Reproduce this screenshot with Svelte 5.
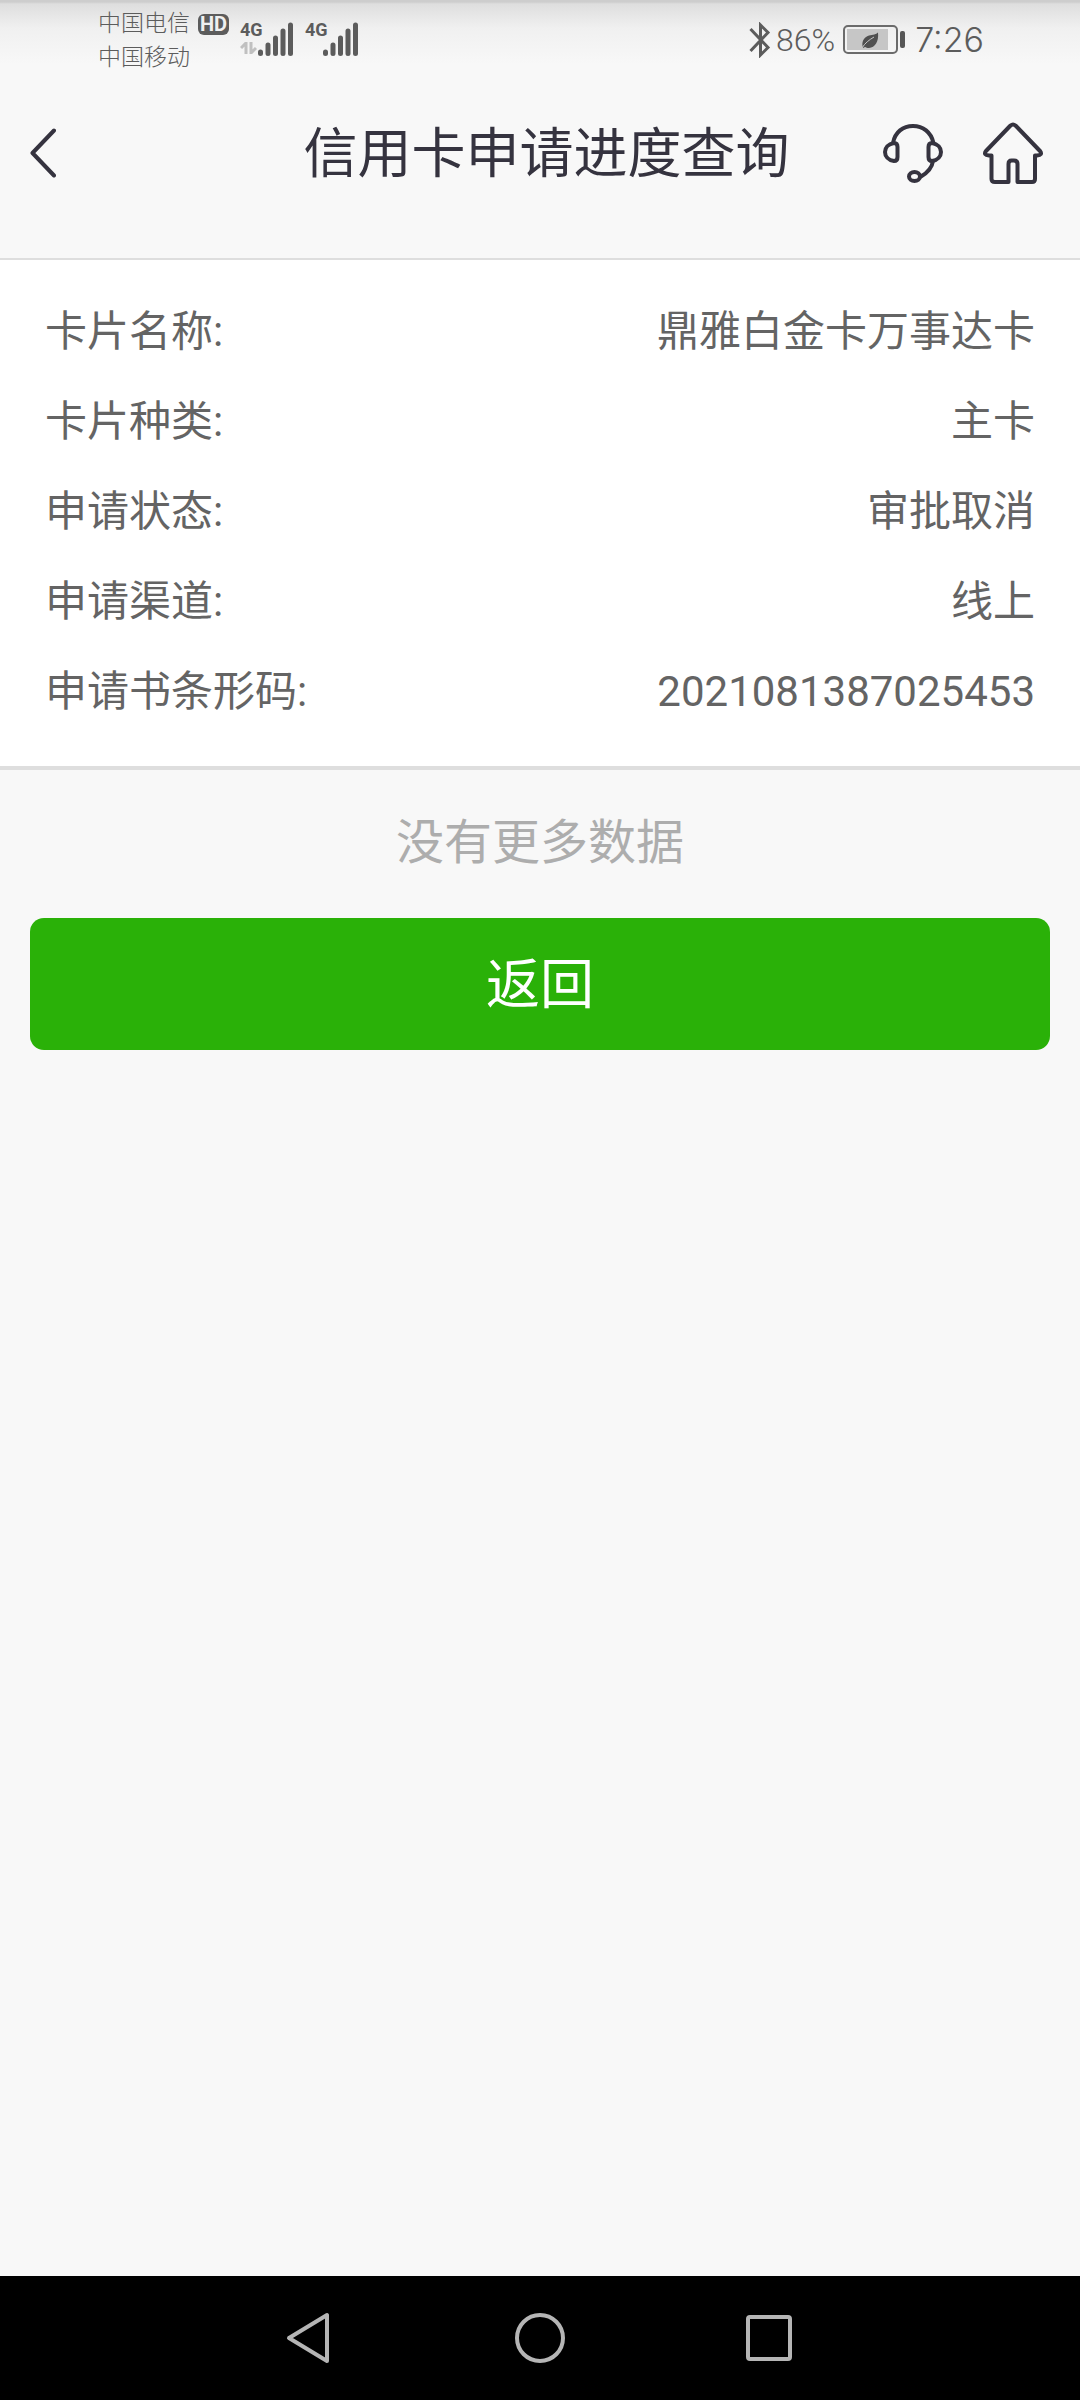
<script lang="ts">
  const details = [
    { label: '卡片名称:', value: '鼎雅白金卡万事达卡' },
    { label: '卡片种类:', value: '主卡' },
    { label: '申请状态:', value: '审批取消' },
    { label: '申请渠道:', value: '线上' },
    { label: '申请书条形码:', value: '2021081387025453' },
  ];
</script>

{#snippet signal(data: boolean)}
  <div class="signal">
    <div class="network">
      <span>4G</span>
      {#if data}
        <svg width="17" height="12" viewBox="0 0 17 12" aria-hidden="true">
          <path d="M6 12V1L1 6M11 0v11l5-5" />
        </svg>
      {/if}
    </div>
    <svg class="bars" width="35" height="34" viewBox="0 0 35 34" aria-hidden="true">
      <path d="M2.5 30v1.5M10 23v8.5M17.5 16v15.5M25 9v22.5M32.5 3v28.5" />
    </svg>
  </div>
{/snippet}

<div class="screen">
  <div class="status-bar">
    <div class="status-left">
      <div class="carriers">
        <div class="carrier">中国电信 <span class="hd">HD</span></div>
        <div class="carrier">中国移动</div>
      </div>
      {@render signal(true)}
      {@render signal(false)}
    </div>
    <div class="status-right">
      <svg class="bluetooth" width="22" height="36" viewBox="0 0 22 36" aria-label="蓝牙">
        <path d="M1.500 7 19 25.500 11.500 33V3L19 10.500 1.500 29" />
      </svg>
      <span class="percent">86%</span>
      <svg class="battery" width="62" height="30" viewBox="0 0 62 30" aria-hidden="true">
        <rect x="1" y="1" width="53" height="27" rx="4" fill="none" stroke="#6b6b6b" stroke-width="2" />
        <rect x="4" y="4" width="41" height="21" fill="#c6c6c6" />
        <rect x="57" y="6" width="5" height="17" rx="2" fill="#565656" />
        <path
          d="M20 23c-2-6 1-11 6-12.500 4-1 7-1 9-3 1 9-3 15-9 15.500-2 0-3-.5-4-1z"
          fill="#505050"
        />
        <path d="M19 23c3-5 7-8 12-11" fill="none" stroke="#c6c6c6" />
      </svg>
      <span class="time">7:26</span>
    </div>
  </div>

  <header>
    <button class="icon back" aria-label="后退">
      <svg width="26" height="50" viewBox="0 0 26 50">
        <path d="M24 2.500 2.500 25 24 47.500" />
      </svg>
    </button>
    <h1>信用卡申请进度查询</h1>
    <div class="actions">
      <button class="icon" aria-label="客服">
        <svg width="60" height="62" viewBox="0 0 60 62">
          <path d="M10 21C12 10 20 4 30 4s18 6 20.500 17" />
          <path d="M11 21Q14.500 21 14.500 25V35Q14.500 39 11 39C5 38 2 34 2 30S5 22 11 21z" />
          <path d="M49 21Q45.500 21 45.500 25V35Q45.500 39 49 39C55 38 58 34 58 30S55 22 49 21z" />
          <path d="M50 39c-1 7-6 12-12 15.500" />
          <ellipse cx="31.500" cy="54.500" rx="5.500" ry="4.500" />
        </svg>
      </button>
      <button class="icon" aria-label="首页">
        <svg width="60" height="62" viewBox="0 0 60 62">
          <path
            d="M27.500 3.500Q30 1.500 32.500 3.500L57 29Q60 33 54 33.500H52V57Q52 60 49 60H34.500V42Q34.500 38.500 31 38.500H28.500Q25.500 38.500 25.500 42V60H12Q8.500 60 8.500 57V33.500H6Q0 33 3 29Z"
          />
        </svg>
      </button>
    </div>
  </header>

  <main>
    <dl class="details">
      {#each details as item}
        <div class="row">
          <dt>{item.label}</dt>
          <dd>{item.value}</dd>
        </div>
      {/each}
    </dl>
    <p class="empty">没有更多数据</p>
    <button class="submit">返回</button>
  </main>

  <nav>
    <button class="icon" aria-label="系统返回">
      <svg width="50" height="54" viewBox="0 0 50 54">
        <path d="M42 4v46L4 27z" />
      </svg>
    </button>
    <button class="icon" aria-label="主屏幕">
      <svg width="50" height="54" viewBox="0 0 50 54">
        <circle cx="25" cy="27" r="23" />
      </svg>
    </button>
    <button class="icon" aria-label="最近任务">
      <svg width="50" height="54" viewBox="0 0 50 54">
        <rect x="3" y="6" width="42" height="42" rx="2" />
      </svg>
    </button>
  </nav>
</div>

<style>
  :global(body) {
    margin: 0;
    background: #f8f8f8;
  }

  .screen {
    display: flex;
    flex-direction: column;
    min-height: 100vh;
    background: #f8f8f8;
    color: #646464;
    font-family: Roboto, 'Noto Sans CJK SC', sans-serif;
  }

  button {
    font: inherit;
    cursor: pointer;
  }

  .icon {
    display: flex;
    padding: 0;
    border: 0;
    background: none;
  }

  .icon path,
  .icon ellipse,
  .icon circle,
  .icon rect {
    fill: none;
    stroke: #35333f;
    stroke-width: 4;
    stroke-linecap: round;
    stroke-linejoin: round;
  }

  /* status bar */
  .status-bar {
    display: flex;
    justify-content: space-between;
    height: 80px;
    padding: 0 96px 0 98px;
    background: linear-gradient(#cdcdcd 0, #cdcdcd 2px, #dedede 4px, #f0f0f0 28px, #f8f8f8 64px);
    color: #5c5c5c;
  }

  .status-left {
    display: flex;
    align-items: flex-start;
  }

  .carriers {
    width: 142px;
    padding-top: 7px;
    font-size: 23px;
    font-weight: 300;
    line-height: 34px;
  }

  .carrier {
    display: flex;
    align-items: center;
    gap: 8px;
    height: 34px;
  }

  .hd {
    width: 31px;
    border-radius: 6px;
    background: #5c5c5c;
    color: #f0f0f0;
    font-size: 20px;
    font-weight: 700;
    line-height: 21px;
    text-align: center;
  }

  .signal {
    display: flex;
    align-items: flex-end;
    width: 65px;
    height: 56px;
  }

  .network {
    display: flex;
    flex-direction: column;
    width: 18px;
    height: 36px;
    font-size: 18px;
    font-weight: 700;
    line-height: 20px;
  }

  .network path {
    fill: none;
    stroke: #c0c0c0;
    stroke-width: 3;
  }

  .network svg {
    margin-top: 2px;
  }

  .bars path {
    fill: none;
    stroke: #5c5c5c;
    stroke-width: 5;
    stroke-linecap: round;
  }

  .status-right {
    display: flex;
    align-items: center;
    font-size: 34px;
    font-weight: 300;
    line-height: 80px;
  }

  .bluetooth path {
    fill: none;
    stroke: #5c5c5c;
    stroke-width: 3;
  }

  .percent {
    margin: 0 8px 0 5px;
    font-size: 32px;
  }

  .time {
    margin-left: 10px;
    font-family: Inter, sans-serif;
  }

  /* title bar */
  header {
    display: grid;
    grid-template-columns: 1fr auto 1fr;
    align-items: center;
    padding: 30px 37px 62px 30px;
    border-bottom: 2px solid #dedede;
  }

  h1 {
    margin: 0;
    padding: 4px 0 0 20px;
    color: #35333f;
    font-size: 54px;
    font-weight: 400;
    line-height: 82px;
  }

  .actions {
    display: flex;
    justify-content: flex-end;
    gap: 40px;
  }

  /* application details */
  main {
    flex: 1;
  }

  .details {
    margin: 0;
    padding: 27px 45px 29px;
    border-bottom: 4px solid #dedede;
    background: #fff;
    font-size: 42px;
    line-height: 90px;
  }

  .row {
    display: flex;
    justify-content: space-between;
  }

  dd {
    margin: 0;
  }

  .empty {
    margin: 0;
    padding: 33px 0 35px;
    color: #adadad;
    font-size: 48px;
    line-height: 80px;
    text-align: center;
  }

  .submit {
    display: block;
    width: calc(100% - 60px);
    margin: 0 30px;
    padding: 4px 0 0;
    border: 0;
    border-radius: 14px;
    background: #2ab108;
    color: #fff;
    font-size: 54px;
    line-height: 128px;
  }

  /* system navigation */
  nav {
    display: flex;
    justify-content: center;
    align-items: center;
    gap: 180px;
    height: 124px;
    background: #000;
  }

  nav .icon path,
  nav .icon circle,
  nav .icon rect {
    stroke: #b5b5b5;
  }
</style>
